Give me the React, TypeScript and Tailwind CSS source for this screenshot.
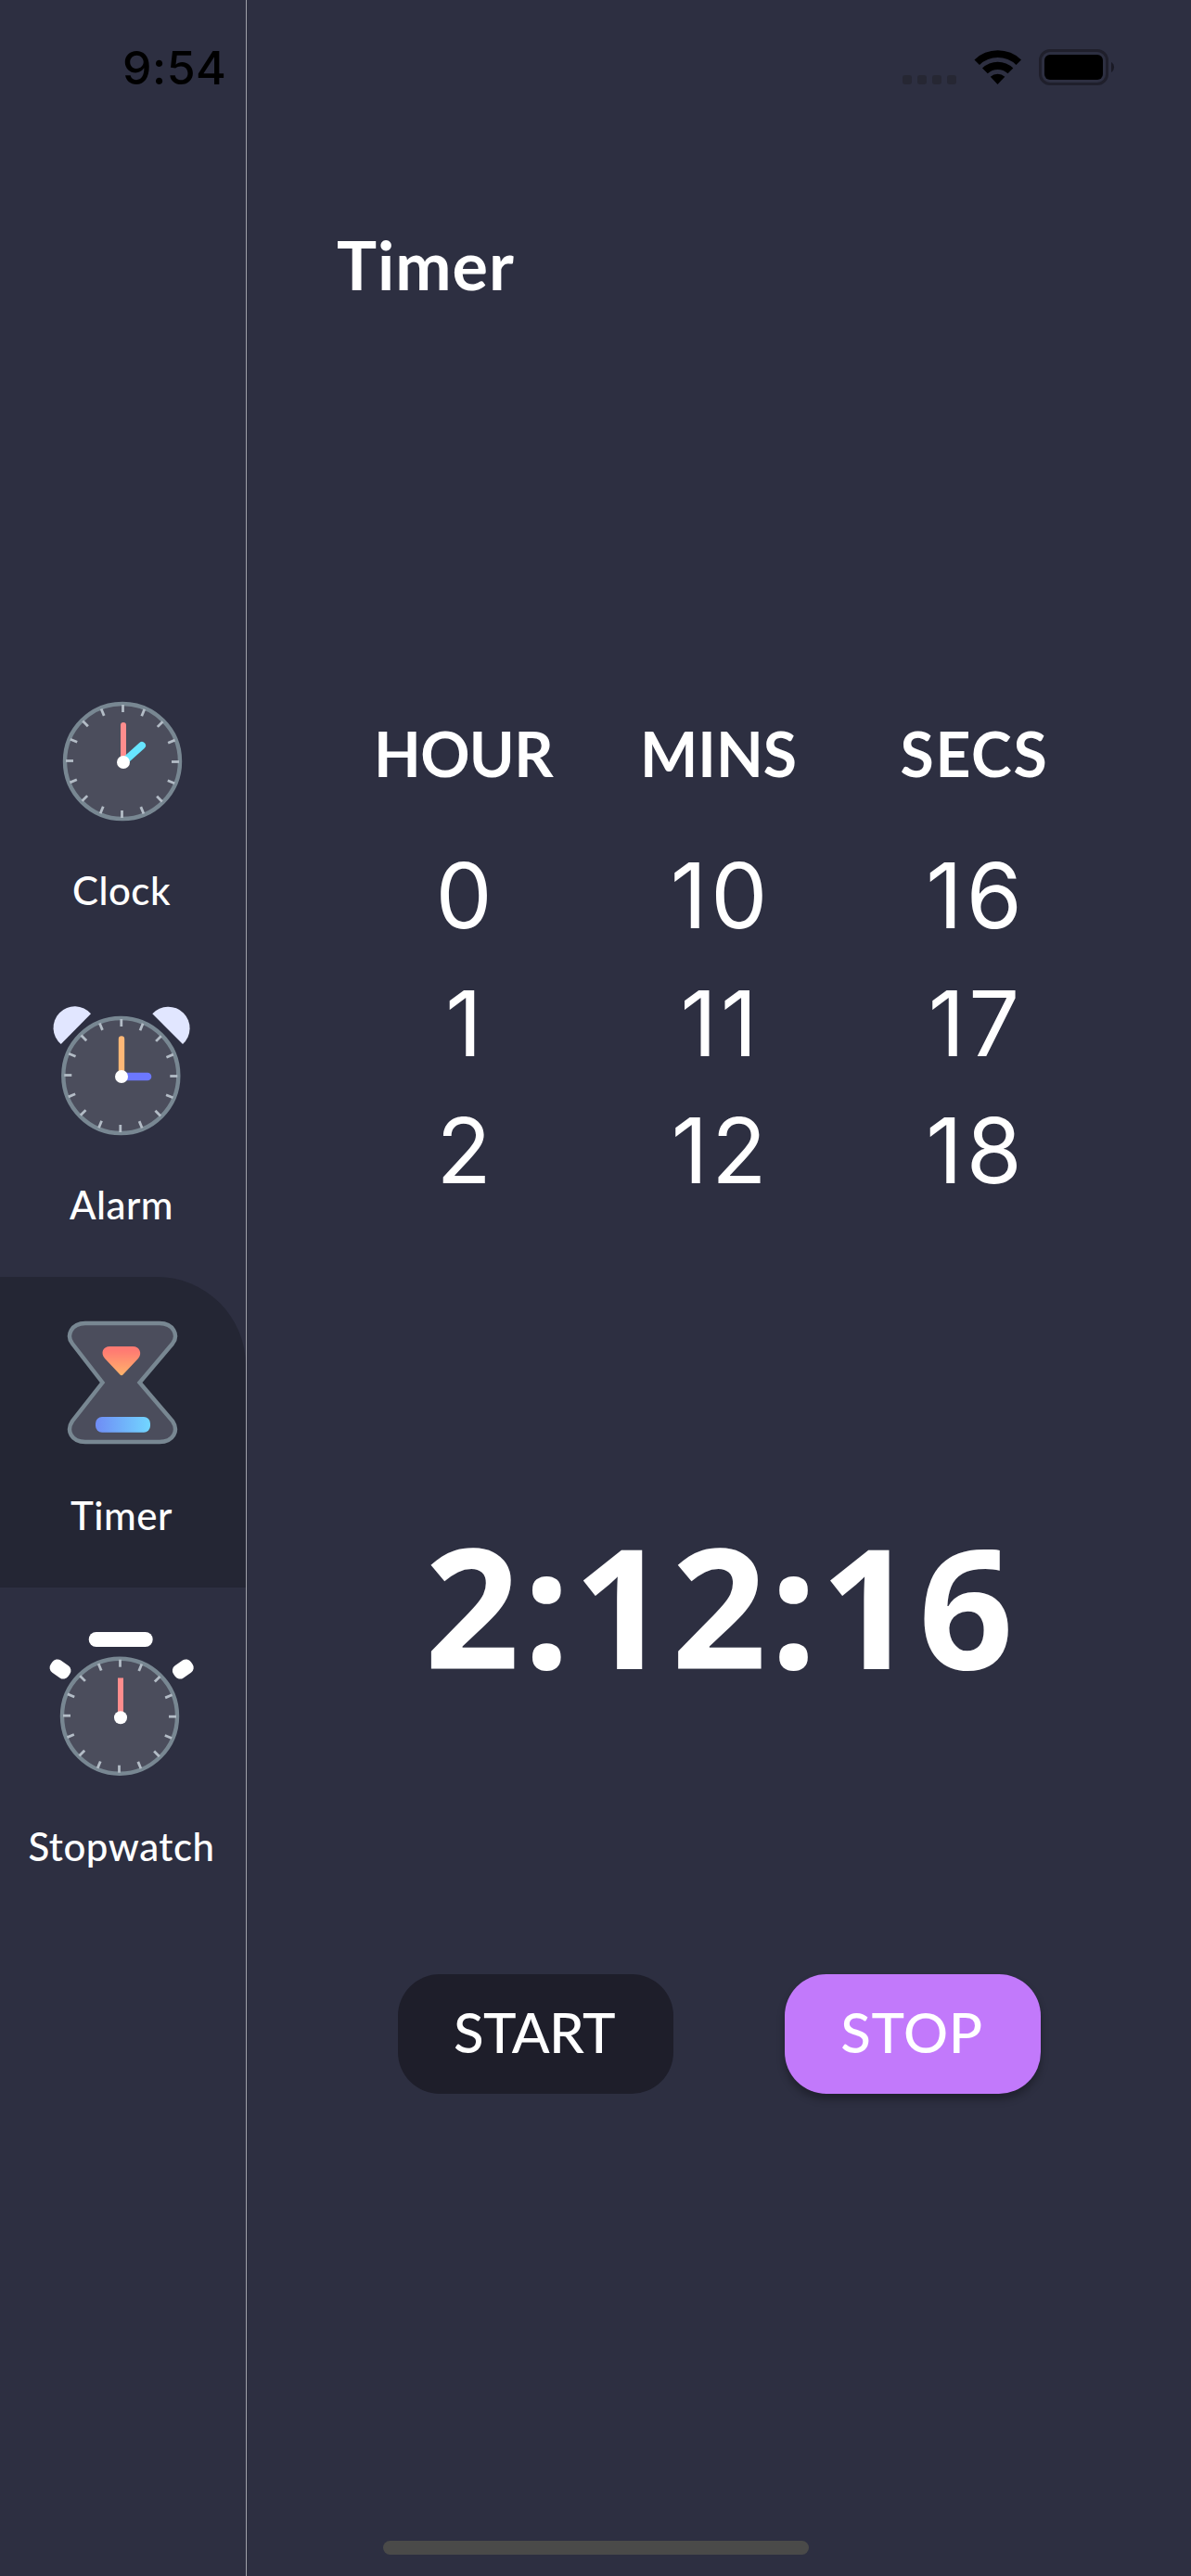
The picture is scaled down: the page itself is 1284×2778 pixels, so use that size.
import type { ReactNode } from 'react';

function Dial({ cx, cy }: { cx: number; cy: number }) {
  return (
    <g>
      <circle cx={cx} cy={cy} r={62} fill="#4b4d5c" stroke="#788792" strokeWidth={4.4} />
      {Array.from({ length: 16 }, (_, i) => (
        <line
          key={i}
          x1={cx + 0.5}
          x2={cx + 0.5}
          y1={cy - 61}
          y2={cy - 53}
          stroke="#b3bcc6"
          strokeWidth={2.8}
          transform={`rotate(${i * 22.5} ${cx} ${cy})`}
        />
      ))}
    </g>
  );
}

function ItemSvg({ children }: { children: ReactNode }) {
  return (
    <svg className="block h-[220px] w-[265px]" viewBox="0 0 265 220" fill="none">
      {children}
    </svg>
  );
}

function ClockIcon() {
  return (
    <ItemSvg>
      <Dial cx={132} cy={118} />
      <path d="M133 79V118" stroke="#ff8d8d" strokeWidth={6} strokeLinecap="round" />
      <path d="M134 118L153 101" stroke="#67e5ff" strokeWidth={8} strokeLinecap="round" />
      <circle cx={133} cy={119} r={7} fill="#fff" />
    </ItemSvg>
  );
}

function AlarmIcon() {
  return (
    <ItemSvg>
      <path d="M65.700 84A23.050 23.050 0 1 1 98 51.300Z" fill="#e1e6ff" />
      <path d="M197 84A23.150 23.150 0 1 0 164.300 51.300Z" fill="#e1e6ff" />
      <Dial cx={130.3} cy={118} />
      <path d="M131 78.5V118" stroke="#ffb877" strokeWidth={6.4} strokeLinecap="round" />
      <path d="M131 119H159" stroke="#6c78ff" strokeWidth={8.6} strokeLinecap="round" />
      <circle cx={131} cy={119} r={7} fill="#fff" />
    </ItemSvg>
  );
}

function TimerIcon() {
  return (
    <ItemSvg>
      <defs>
        <linearGradient id="sand" x1="0" y1="0" x2="0" y2="1">
          <stop offset="0.15" stopColor="#ff7b72" />
          <stop offset="1" stopColor="#ffb36b" />
        </linearGradient>
        <linearGradient id="base" x1="0" y1="0" x2="1" y2="0">
          <stop offset="0" stopColor="#6f8cf5" />
          <stop offset="1" stopColor="#72d6ff" />
        </linearGradient>
      </defs>
      <path
        d="M92 50H172C187 50 193 63 186 72L150.500 114L186 155.500C193 166 187 178 172 178H92C77 178 71 166 78 155.500L110.500 114L78 72C71 63 77 50 92 50Z"
        fill="#4b4d5c"
        stroke="#788792"
        strokeWidth={4.4}
      />
      <path
        d="M118.500 75H143C151 75 153.500 83 149 88L133 105Q131 107.500 129 105L113 88C108 82 111 75 118.500 75Z"
        fill="url(#sand)"
      />
      <rect x={103} y={151} width={59} height={16.700} rx={7} fill="url(#base)" />
    </ItemSvg>
  );
}

function StopwatchIcon() {
  return (
    <ItemSvg>
      <rect x={95.700} y={48} width={69} height={16} rx={8} fill="#fff" />
      <rect x={53.500} y={80} width={23} height={16} rx={6.500} fill="#fff" transform="rotate(35 65 88)" />
      <rect x={185.800} y={80} width={23} height={16} rx={6.500} fill="#fff" transform="rotate(-35 197.300 88)" />
      <Dial cx={129} cy={138.700} />
      <path d="M130 97.500V139" stroke="#ff8d8d" strokeWidth={6} />
      <circle cx={130} cy={140.300} r={7} fill="#fff" />
    </ItemSvg>
  );
}

function MenuItem({ icon, label, className }: { icon: ReactNode; label: string; className: string }) {
  return (
    <div className={`flex w-[265px] flex-col items-center ${className}`}>
      {icon}
      <span className="pr-[3px] font-medium leading-[50px] tracking-[0.500px]">{label}</span>
    </div>
  );
}

function StatusBar() {
  return (
    <div className="absolute inset-x-0 top-0 flex h-[146px] items-start justify-between pl-[132px] pr-[81px] pt-[43px] text-black">
      <span className="font-['Inter',sans-serif] text-[50px] font-[550] leading-[60px] tracking-[0.500px]">9:54</span>
      <svg className="h-[60px] w-[232px]" viewBox="971 43 232 60">
        <g fill="#262733">
          <rect x={973} y={81} width={10} height={10} rx={3} />
          <rect x={989} y={81} width={10} height={10} rx={3} />
          <rect x={1005} y={81} width={10} height={10} rx={3} />
          <rect x={1021} y={81} width={10} height={10} rx={3} />
        </g>
        <path d="M1050.500 64.500A36 36 0 0 1 1101 64.500L1095.500 70A28.500 28.500 0 0 0 1056 70Z" />
        <path d="M1059 73.500A24 24 0 0 1 1092.300 73.500L1086.500 79.300A15.600 15.600 0 0 0 1064.800 79.300Z" />
        <path d="M1067.800 82.800A11.500 11.500 0 0 1 1083.300 82.800L1075.500 91Z" />
        <rect x={1121.500} y={54.500} width={72} height={36} rx={10.500} fill="none" stroke="#1f1f2b" strokeWidth={3} />
        <rect x={1126} y={59} width={63} height={27} rx={6} />
        <path d="M1198 67A6.500 6.500 0 0 1 1198 78Z" fill="#1a1a25" />
      </svg>
    </div>
  );
}

function Column({ title, values, titleClass }: { title: string; values: string[]; titleClass: string }) {
  return (
    <div className="flex flex-col items-center">
      <span className={`text-[66px] font-bold leading-[80px] ${titleClass}`}>{title}</span>
      <div className="mt-[44px] flex flex-col items-center pr-[1px] font-['Inter',sans-serif] text-[97px] leading-[137.500px]">
        {values.map((v) => (
          <span key={v} className="-mr-[4px] tracking-[4px]">
            {v}
          </span>
        ))}
      </div>
    </div>
  );
}

export default function App() {
  return (
    <div className="relative flex h-[2778px] w-[1284px] overflow-hidden bg-[#2d2f41] font-['Lato',sans-serif] text-white">
      <nav className="w-[266px] shrink-0 border-r border-[#a0a1a9] pt-[703px] text-[42px]">
        <MenuItem icon={<ClockIcon />} label="Clock" className="h-[339px] gap-[12px]" />
        <MenuItem icon={<AlarmIcon />} label="Alarm" className="h-[335px] gap-[12px]" />
        <MenuItem icon={<TimerIcon />} label="Timer" className="h-[335px] gap-[12px] rounded-tr-[96px] bg-[#242634]" />
        <MenuItem icon={<StopwatchIcon />} label="Stopwatch" className="h-[357px] gap-[34px]" />
      </nav>

      <main className="flex flex-1 flex-col pl-[97px] pt-[240px]">
        <h1 className="text-[72px] font-bold leading-[90px] tracking-[1px]">Timer</h1>
        <div className="mt-[443px] grid h-[527px] w-[825px] grid-cols-3">
          <Column title="HOUR" values={['0', '1', '2']} titleClass="pr-[2px] tracking-[-0.700px]" />
          <Column title="MINS" values={['10', '11', '12']} titleClass="pr-[2px] tracking-[0px]" />
          <Column title="SECS" values={['16', '17', '18']} titleClass="tracking-[1.700px]" />
        </div>
        <div className="mt-[331px] w-[825px] pl-[3px] text-center font-['Open_Sans',sans-serif] text-[179px] font-[670] leading-[200px] tracking-[3.500px]">
          2:12:16
        </div>
        <div className="mt-[298px] flex gap-[120px] pl-[66px] text-[60px] font-medium">
          <button className="h-[129px] w-[297px] rounded-[45px] bg-[#1e1e2a] pb-[6px] pr-[3px] tracking-[-0.600px]">
            START
          </button>
          <button className="h-[129px] w-[276px] rounded-[45px] bg-[#c279fb] pb-[6px] pr-[2px] tracking-[0.600px] shadow-[0_6px_8px_rgba(0,0,0,0.3)]">
            STOP
          </button>
        </div>
      </main>

      <StatusBar />
      <div className="absolute bottom-[23px] left-[413px] h-[15px] w-[459px] rounded-full bg-[#4a4a49]" />
    </div>
  );
}
